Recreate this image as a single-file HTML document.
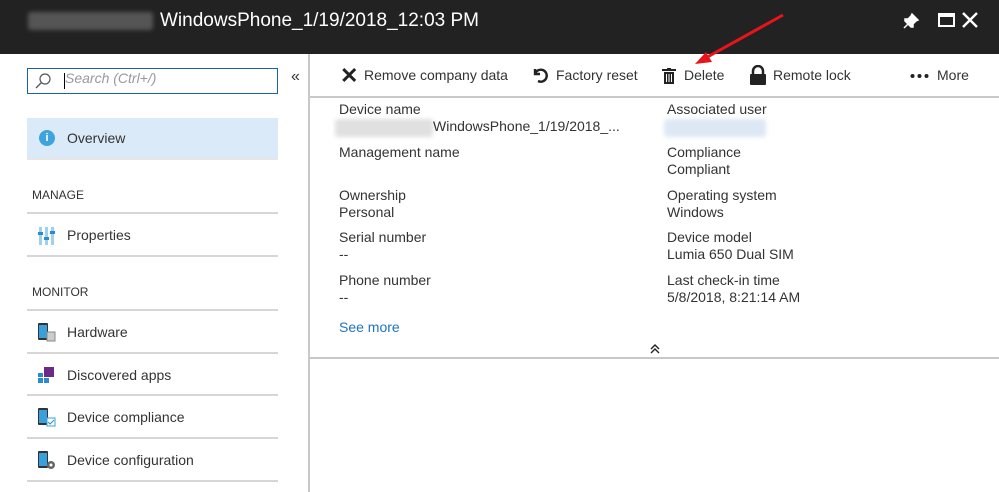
<!DOCTYPE html>
<html><head><meta charset="utf-8"><style>
*{margin:0;padding:0;box-sizing:border-box}
body{width:999px;height:492px;overflow:hidden;background:#fff;font-family:"Segoe UI","Liberation Sans",sans-serif;color:#333;position:relative;font-size:14px}
.a{position:absolute;white-space:nowrap}
.hdr{position:absolute;left:0;top:0;width:999px;height:54px;background:#222}
.line{position:absolute;height:2px;background:#d6d6d6}
.t{font-size:14px;color:#333}
.blur{position:absolute;background:#e0e0e0;filter:blur(2px);border-radius:3px}
</style></head><body>
<div class="hdr"></div>
<div class="blur" style="left:28px;top:12px;width:125px;height:18px;background:#555"></div>
<div class="a" style="left:160px;top:10px;font-size:19px;color:#fff">WindowsPhone_1/19/2018_12:03 PM</div>
<svg class="a" style="left:902px;top:12px" width="18" height="18" viewBox="0 0 18 18"><path d="M10 2l6 6-2 1-3 3 0 3-2 0-6-6 0-2 3 0 3-3z M6 12l-4 4" fill="#fff" stroke="#fff" stroke-width="1.5"/></svg>
<div class="a" style="left:938px;top:13px;width:17px;height:14px;border:2px solid #fff;border-top-width:4px"></div>
<svg class="a" style="left:962px;top:12px" width="16" height="16"><path d="M1 1l14 14M15 1L1 15" stroke="#fff" stroke-width="2.4"/></svg>
<!-- left -->
<div class="a" style="left:27px;top:68px;width:251px;height:26px;border:1px solid #1a5eb5"></div>
<svg class="a" style="left:34px;top:72px" width="18" height="18" viewBox="0 0 18 18"><circle cx="11" cy="7" r="5" fill="none" stroke="#555" stroke-width="1.2"/><path d="M7 11l-5 5" stroke="#555" stroke-width="1.3"/></svg>
<div class="a" style="left:64px;top:73px;width:1px;height:16px;background:#000"></div>
<div class="a" style="left:65px;top:70px;font-size:14px;color:#999;font-style:italic">Search (Ctrl+/)</div>
<div class="a" style="left:291px;top:68px;font-size:16px;color:#333">«</div>
<div class="a" style="left:27px;top:118px;width:251px;height:40px;background:#dbeaf8"></div>
<div class="a" style="left:39px;top:130px;width:16px;height:16px;border-radius:50%;background:#3fa3dc;color:#fff;font-size:11px;font-weight:bold;text-align:center;line-height:16px">i</div>
<div class="a t" style="left:67px;top:130px">Overview</div>
<div class="line" style="left:27px;top:158px;width:251px;background:#e6e6e6"></div>
<div class="a" style="left:32px;top:188px;font-size:12px;color:#333">MANAGE</div>
<div class="line" style="left:27px;top:212px;width:251px"></div>
<svg class="a" style="left:38px;top:227px" width="18" height="18"><rect x="1" y="0" width="3" height="18" fill="#9cd2ef"/><rect x="7" y="0" width="3" height="18" fill="#9cd2ef"/><rect x="13" y="0" width="3" height="18" fill="#9cd2ef"/><rect x="0" y="5" width="5" height="3" fill="#2a8bd2"/><rect x="6" y="10" width="5" height="3" fill="#2a8bd2"/><rect x="12" y="4" width="5" height="3" fill="#2a8bd2"/></svg>
<div class="a t" style="left:67px;top:227px">Properties</div>
<div class="line" style="left:27px;top:255px;width:251px"></div>
<div class="a" style="left:32px;top:285px;font-size:12px;color:#333">MONITOR</div>
<div class="line" style="left:27px;top:309px;width:251px"></div>
<svg class="a" style="left:38px;top:323px" width="18" height="20"><rect x="0" y="0" width="10" height="17" rx="1" fill="#333"/><rect x="1" y="2" width="8" height="13" fill="#3aa0dc"/><rect x="9" y="9" width="8" height="9" fill="#ccc" stroke="#888"/></svg>
<div class="a t" style="left:67px;top:324px">Hardware</div>
<div class="line" style="left:27px;top:352px;width:251px"></div>
<svg class="a" style="left:38px;top:367px" width="18" height="16"><rect x="6" y="0" width="10" height="10" fill="#6b2a8a"/><rect x="0" y="6" width="5" height="4" fill="#2a8bd2"/><rect x="0" y="11" width="5" height="5" fill="#2a8bd2"/><rect x="6" y="11" width="5" height="5" fill="#2a8bd2"/></svg>
<div class="a t" style="left:67px;top:367px">Discovered apps</div>
<div class="line" style="left:27px;top:394px;width:251px"></div>
<svg class="a" style="left:38px;top:408px" width="18" height="20"><rect x="0" y="0" width="10" height="17" rx="1" fill="#333"/><rect x="1" y="2" width="8" height="13" fill="#3aa0dc"/><rect x="9" y="10" width="8" height="8" fill="#fff" stroke="#3aa0dc"/><path d="M10 14l2 2 4-4" stroke="#2a8bd2" fill="none"/></svg>
<div class="a t" style="left:67px;top:409px">Device compliance</div>
<div class="line" style="left:27px;top:437px;width:251px"></div>
<svg class="a" style="left:38px;top:451px" width="18" height="20"><rect x="0" y="0" width="10" height="17" rx="1" fill="#333"/><rect x="1" y="2" width="8" height="13" fill="#3aa0dc"/><circle cx="13" cy="14" r="4" fill="#666"/><circle cx="13" cy="14" r="1.5" fill="#fff"/></svg>
<div class="a t" style="left:67px;top:452px">Device configuration</div>
<div class="line" style="left:27px;top:480px;width:251px"></div>
<!-- divider -->
<div class="a" style="left:308px;top:54px;width:2px;height:438px;background:#c8c8c8"></div>
<!-- toolbar -->
<div class="a" style="left:340px;top:63px;font-size:22px;font-weight:bold;color:#222">✕</div>
<div class="a t" style="left:364px;top:67px">Remove company data</div>
<svg class="a" style="left:531px;top:66px" width="18" height="18" viewBox="0 0 18 18"><path d="M4 3v5h5 M4 8a6 6 0 1 1 3 7" fill="none" stroke="#222" stroke-width="2.4"/></svg>
<div class="a t" style="left:556px;top:67px">Factory reset</div>
<svg class="a" style="left:662px;top:68px" width="14" height="16"><rect x="0" y="1" width="14" height="2" fill="#222"/><rect x="5" y="0" width="4" height="2" fill="#222"/><rect x="2" y="4" width="10" height="12" fill="#222"/><rect x="4" y="6" width="1" height="8" fill="#fff"/><rect x="6.5" y="6" width="1" height="8" fill="#fff"/><rect x="9" y="6" width="1" height="8" fill="#fff"/></svg>
<div class="a t" style="left:684px;top:67px">Delete</div>
<svg class="a" style="left:749px;top:65px" width="18" height="20"><path d="M4 9V6a5 5 0 0 1 10 0v3" fill="none" stroke="#222" stroke-width="2.5"/><rect x="1" y="9" width="16" height="11" rx="1" fill="#222"/></svg>
<div class="a t" style="left:773px;top:67px">Remote lock</div>
<svg class="a" style="left:910px;top:73px" width="20" height="6"><circle cx="2.5" cy="3" r="2" fill="#222"/><circle cx="9.5" cy="3" r="2" fill="#222"/><circle cx="16.5" cy="3" r="2" fill="#222"/></svg>
<div class="a t" style="left:937px;top:67px">More</div>
<div class="a" style="left:310px;top:96px;width:689px;height:2px;background:#c8c8c8"></div>
<!-- arrow -->
<svg class="a" style="left:690px;top:10px" width="100" height="55"><line x1="93" y1="5" x2="12" y2="50" stroke="#e8141b" stroke-width="3"/><path d="M5 54l17-2-6-10z" fill="#e8141b"/></svg>
<!-- details -->
<div class="a t" style="left:339px;top:101px">Device name</div>
<div class="blur" style="left:335px;top:119px;width:98px;height:18px"></div>
<div class="a t" style="left:433px;top:118px">WindowsPhone_1/19/2018_...</div>
<div class="a t" style="left:339px;top:144px">Management name</div>
<div class="a t" style="left:339px;top:187px">Ownership</div>
<div class="a t" style="left:339px;top:204px">Personal</div>
<div class="a t" style="left:339px;top:229px">Serial number</div>
<div class="a t" style="left:339px;top:246px">--</div>
<div class="a t" style="left:339px;top:272px">Phone number</div>
<div class="a t" style="left:339px;top:289px">--</div>
<div class="a" style="left:339px;top:319px;font-size:14px;color:#1e73c4">See more</div>
<div class="a t" style="left:667px;top:101px">Associated user</div>
<div class="blur" style="left:664px;top:119px;width:102px;height:18px;background:#dde8f4"></div>
<div class="a t" style="left:667px;top:144px">Compliance</div>
<div class="a t" style="left:667px;top:161px">Compliant</div>
<div class="a t" style="left:667px;top:187px">Operating system</div>
<div class="a t" style="left:667px;top:204px">Windows</div>
<div class="a t" style="left:667px;top:229px">Device model</div>
<div class="a t" style="left:667px;top:246px">Lumia 650 Dual SIM</div>
<div class="a t" style="left:667px;top:272px">Last check-in time</div>
<div class="a t" style="left:667px;top:289px">5/8/2018, 8:21:14 AM</div>
<svg class="a" style="left:649px;top:343px" width="12" height="12"><path d="M2 6l4-4 4 4 M2 10l4-4 4 4" fill="none" stroke="#222" stroke-width="1.4"/></svg>
<div class="a" style="left:310px;top:357px;width:689px;height:2px;background:#c8c8c8"></div>
</body></html>
